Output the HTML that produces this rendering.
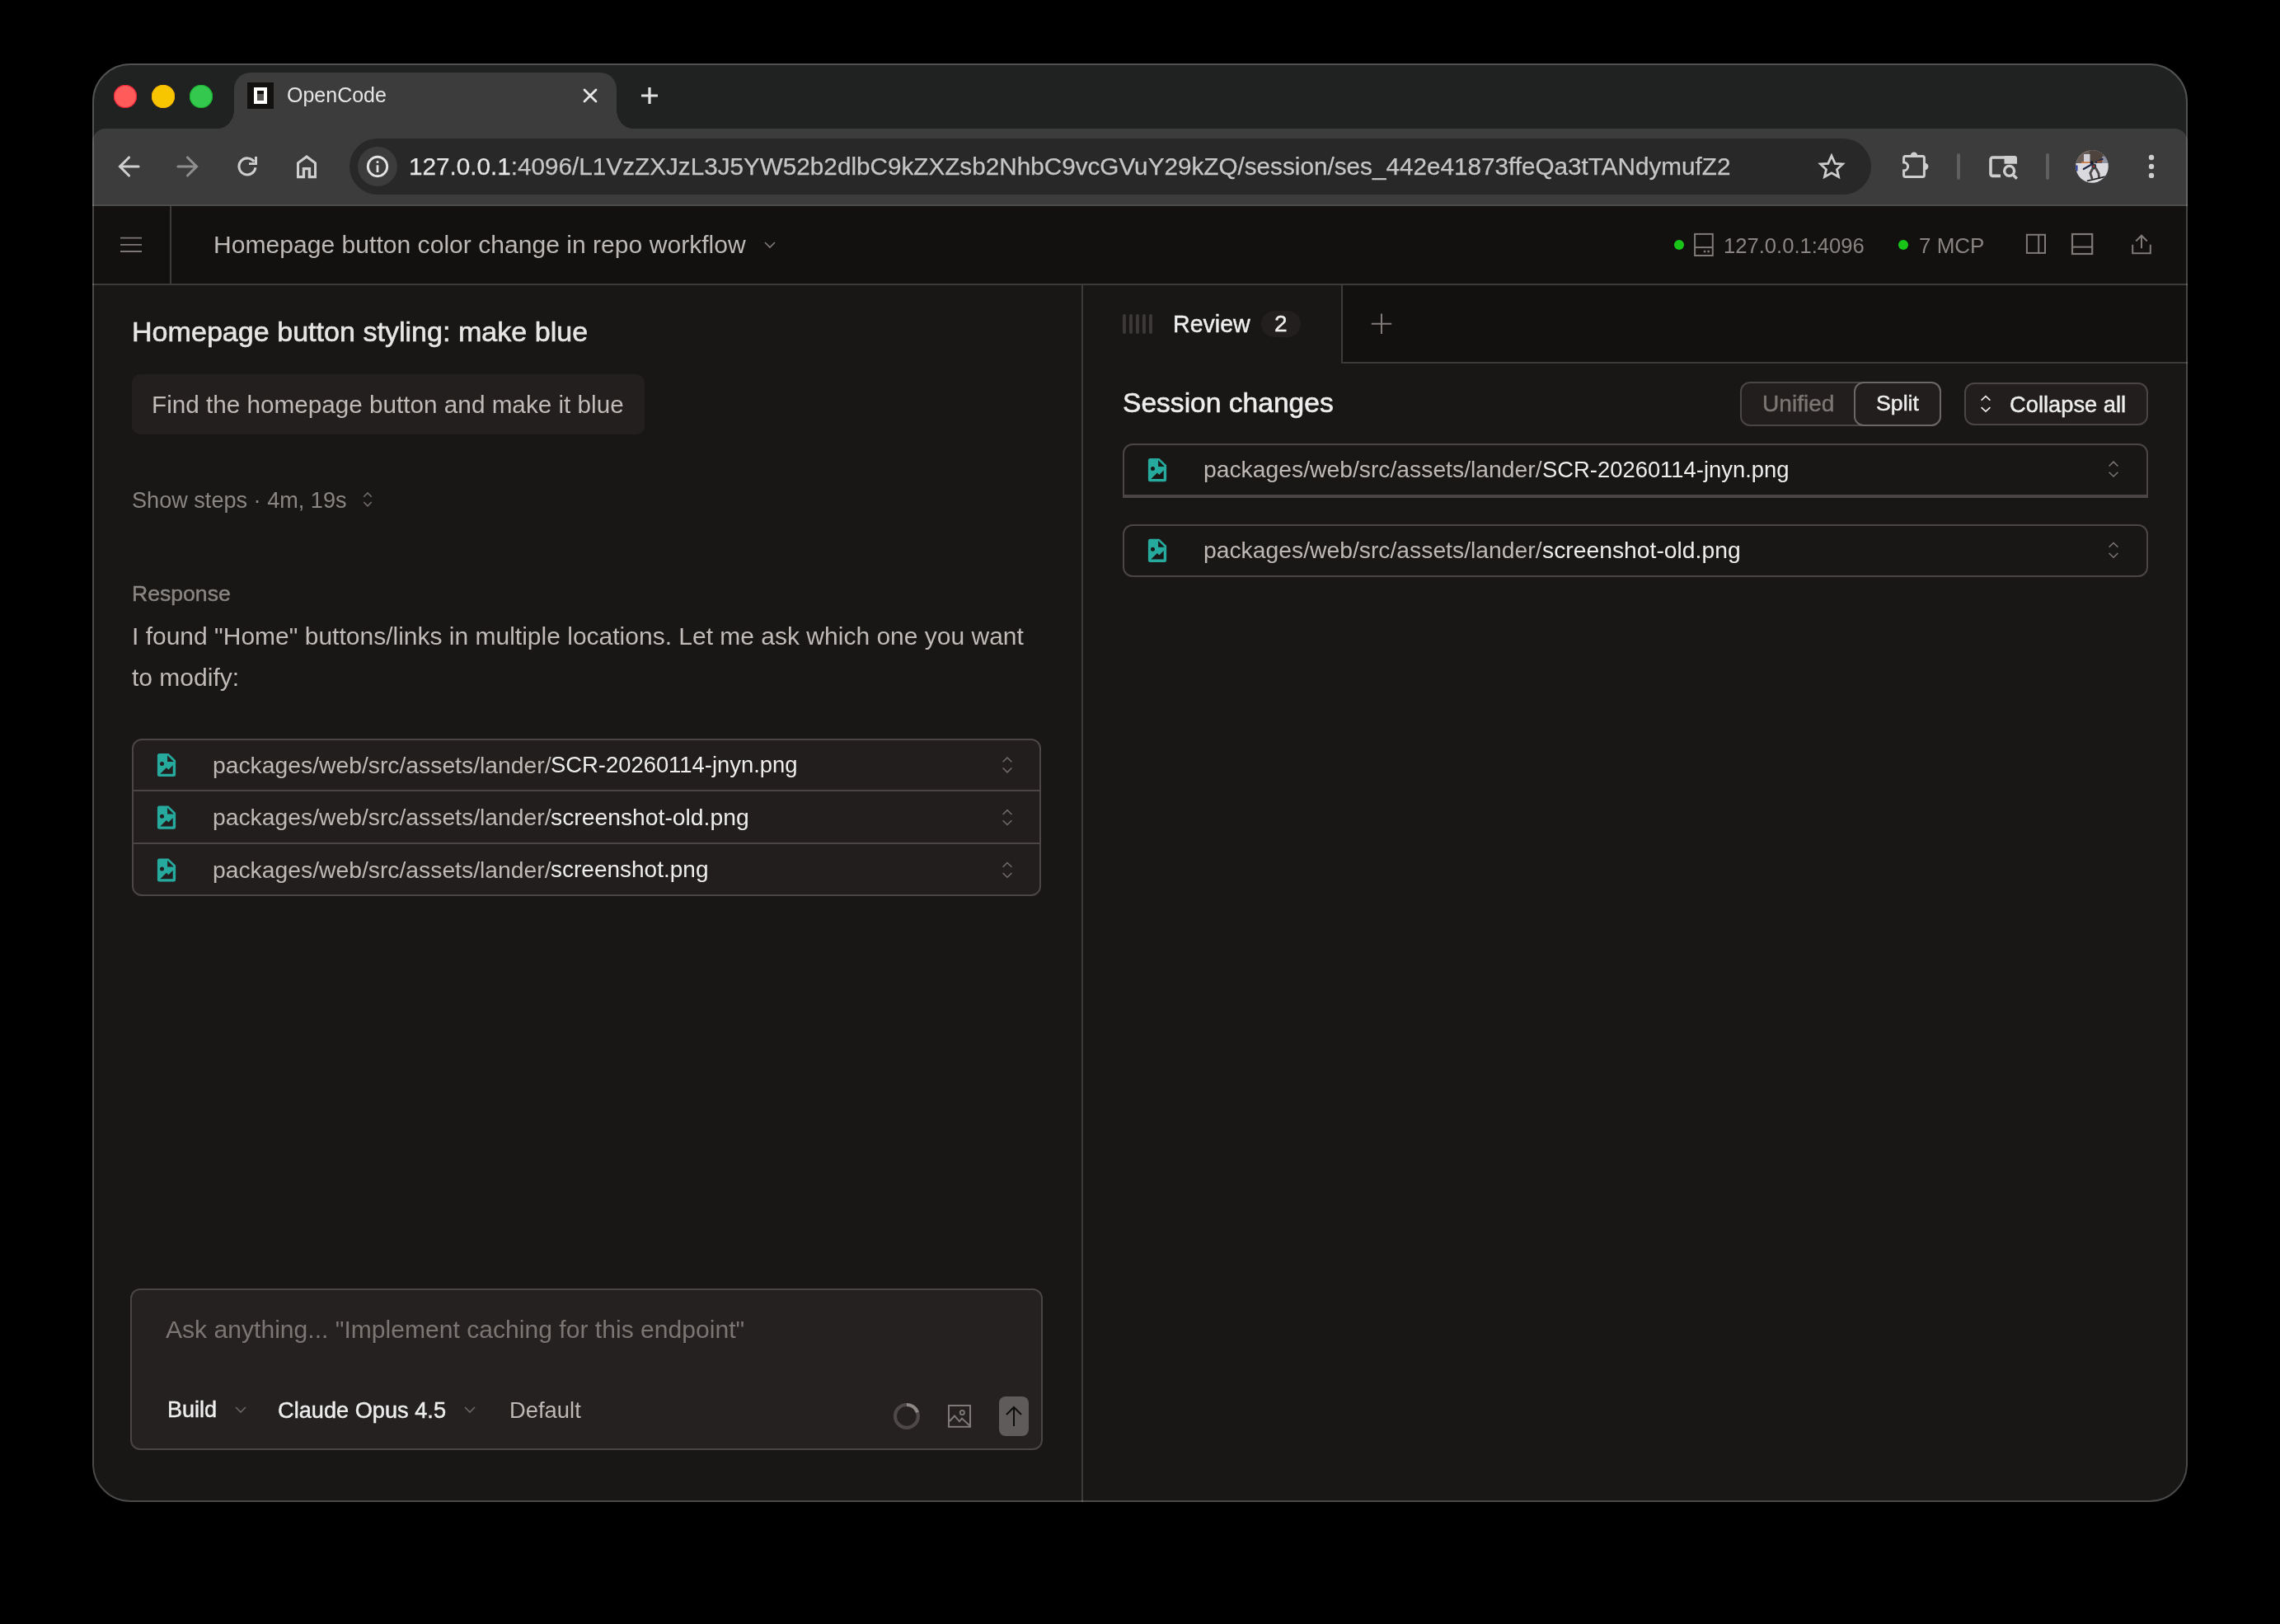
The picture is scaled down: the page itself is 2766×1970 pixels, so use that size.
<!DOCTYPE html>
<html><head><meta charset="utf-8">
<style>
html,body{margin:0;padding:0;background:#000;width:2766px;height:1970px;overflow:hidden;}
body{position:relative;font-family:"Liberation Sans",sans-serif;}
.clip{position:absolute;left:0;top:0;width:2766px;height:1970px;clip-path:inset(77px 112px 148px 112px round 46px);}
.a{position:absolute;}
.t{position:absolute;white-space:nowrap;line-height:1;will-change:transform;}
.m{-webkit-text-stroke:0.45px currentColor;}
svg{position:absolute;overflow:visible;}
</style></head><body>
<div class="clip">
  <!-- title bar -->
  <div class="a" style="left:112px;top:77px;width:2542px;height:110px;background:#202121;"></div>
  <!-- toolbar -->
  <div class="a" style="left:112px;top:156px;width:2542px;height:94px;background:#3c3c3c;border-radius:16px 16px 0 0;"></div>
  <!-- tab -->
  <div class="a" style="left:284px;top:88px;width:464px;height:70px;background:#3c3c3c;border-radius:20px 20px 0 0;"></div>
  <div class="a" style="left:264px;top:133px;width:20px;height:23px;background:radial-gradient(20px 23px at 0 0,transparent 99%,#3c3c3c 100%);"></div>
  <div class="a" style="left:748px;top:133px;width:20px;height:23px;background:radial-gradient(20px 23px at 100% 0,transparent 99%,#3c3c3c 100%);"></div>

  <!-- app -->
  <div class="a" style="left:112px;top:250px;width:2542px;height:1572px;background:#181716;"></div>
  <div class="a" style="left:112px;top:250px;width:2542px;height:94px;background:#121110;"></div>
  <div class="a" style="left:112px;top:248px;width:2542px;height:2px;background:#4a4c4b;"></div>
  <div class="a" style="left:112px;top:344px;width:2542px;height:2px;background:#3d3b3a;"></div>
  <div class="a" style="left:206px;top:250px;width:2px;height:94px;background:#3d3b3a;"></div>
  <div class="a" style="left:1312px;top:346px;width:2px;height:1476px;background:#3d3b3a;"></div>
  <!-- review tab bar -->
  <div class="a" style="left:1629px;top:346px;width:1025px;height:93px;background:#121110;"></div>
  <div class="a" style="left:1627px;top:346px;width:2px;height:95px;background:#3d3b3a;"></div>
  <div class="a" style="left:1627px;top:439px;width:1027px;height:2px;background:#3d3b3a;"></div>
</div>
<div class="a" style="left:112px;top:77px;width:2542px;height:1745px;box-sizing:border-box;border:2px solid rgba(255,255,255,0.22);border-radius:46px;"></div>

<!-- traffic lights -->
<div class="a" style="left:138px;top:103px;width:28px;height:28px;border-radius:50%;background:#fe5b5a;box-shadow:inset 0 0 0 1px #e61e32;"></div>
<div class="a" style="left:184px;top:103px;width:28px;height:28px;border-radius:50%;background:#f8c600;box-shadow:inset 0 0 0 1px #f4b400;"></div>
<div class="a" style="left:230px;top:103px;width:28px;height:28px;border-radius:50%;background:#34c84f;box-shadow:inset 0 0 0 1px #16b22c;"></div>


<!-- app header -->
<div class="t" style="left:259px;top:281.5px;font-size:30.1px;color:#bdb9b6;">Homepage button color change in repo workflow</div>
<div class="a" style="left:2031px;top:291px;width:12px;height:12px;border-radius:50%;background:#19c419;"></div>
<div class="t" style="left:2091px;top:285.6px;font-size:25.6px;color:#8a8583;">127.0.0.1:4096</div>
<div class="a" style="left:2303px;top:291px;width:12px;height:12px;border-radius:50%;background:#19c419;"></div>
<div class="t" style="left:2327.5px;top:285.3px;font-size:26px;color:#8a8583;">7 MCP</div>

<!-- left panel -->
<div class="t m" style="left:160px;top:385.4px;font-size:34.1px;-webkit-text-stroke:0.6px currentColor;color:#e8e6e5;">Homepage button styling: make blue</div>
<div class="a" style="left:160px;top:454px;width:622px;height:73px;border-radius:10px;background:#221f1e;"></div>
<div class="t" style="left:183.5px;top:475.9px;font-size:29.7px;color:#c0bbb8;">Find the homepage button and make it blue</div>
<div class="t" style="left:160px;top:593px;font-size:27.1px;color:#8a8683;">Show steps · 4m, 19s</div>
<div class="t m" style="left:160px;top:706.6px;font-size:26.6px;color:#8a8683;">Response</div>
<div class="t" style="left:160px;top:756.7px;font-size:30px;color:#c0bbb8;">I found "Home" buttons/links in multiple locations. Let me ask which one you want</div>
<div class="t" style="left:160px;top:806.6px;font-size:30px;color:#c0bbb8;">to modify:</div>

<div class="a" style="left:160px;top:896px;width:1103px;height:191px;box-sizing:border-box;border:2px solid #4b4645;border-radius:12px;background:#221e1d;"></div>
<div class="a" style="left:162px;top:957.5px;width:1099px;height:2px;background:#4b4645;"></div>
<div class="a" style="left:162px;top:1022px;width:1099px;height:2px;background:#4b4645;"></div>
<div class="t" style="left:257.5px;top:913.5px;font-size:28.3px;color:#bfb9b6;">packages/web/src/assets/lander/</div><div class="t" style="left:668.3px;top:914.2px;font-size:27.4px;color:#eeeeee;">SCR-20260114-jnyn.png</div>
<div class="t" style="left:257.5px;top:977.1px;font-size:28.3px;color:#bfb9b6;">packages/web/src/assets/lander/</div><div class="t" style="left:668.3px;top:977.1px;font-size:28.3px;color:#eeeeee;">screenshot-old.png</div>
<div class="t" style="left:257.5px;top:1041.1px;font-size:28.3px;color:#bfb9b6;">packages/web/src/assets/lander/</div><div class="t" style="left:668.3px;top:1041.3px;font-size:28.0px;color:#eeeeee;">screenshot.png</div>

<!-- prompt -->
<div class="a" style="left:158px;top:1563px;width:1107px;height:196px;box-sizing:border-box;border:2px solid #4a4544;border-radius:12px;background:#252121;"></div>
<div class="t" style="left:201px;top:1597.5px;font-size:30.1px;color:#7b7674;">Ask anything... "Implement caching for this endpoint"</div>
<div class="t m" style="left:203px;top:1697.2px;font-size:27px;color:#eeeeee;">Build</div>
<div class="t m" style="left:337px;top:1697px;font-size:27.2px;color:#eeeeee;">Claude Opus 4.5</div>
<div class="t" style="left:617.5px;top:1696.8px;font-size:27.4px;color:#bdb8b5;">Default</div>
<div class="a" style="left:1212px;top:1694px;width:36px;height:48px;border-radius:8px;background:#5f5b5a;"></div>

<!-- right panel -->
<div class="t m" style="left:1423px;top:378.8px;font-size:28.6px;color:#eeeeee;">Review</div>
<div class="a" style="left:1530px;top:377px;width:48px;height:32px;border-radius:16px;background:#221f1e;"></div>
<div class="t m" style="left:1546px;top:379.3px;font-size:28px;color:#eeeeee;">2</div>
<div class="t m" style="left:1362px;top:472.4px;font-size:33.6px;-webkit-text-stroke:0.6px currentColor;color:#eeeeee;">Session changes</div>
<div class="a" style="left:2111px;top:463px;width:244px;height:54px;box-sizing:border-box;border:2px solid #4b4645;border-radius:12px;background:#221e1d;"></div>
<div class="a" style="left:2249px;top:463px;width:106px;height:54px;box-sizing:border-box;border:2px solid #6b6766;border-radius:12px;background:#221e1d;"></div>
<div class="t m" style="left:2138px;top:476px;font-size:28.1px;color:#7b7674;">Unified</div>
<div class="t m" style="left:2276px;top:476.2px;font-size:26.7px;color:#eeeeee;">Split</div>
<div class="a" style="left:2383px;top:464px;width:223px;height:52px;box-sizing:border-box;border:2px solid #4b4645;border-radius:12px;background:#221e1d;"></div>
<div class="t m" style="left:2438px;top:476.9px;font-size:27.3px;color:#eeeeee;">Collapse all</div>

<div class="a" style="left:1362px;top:538px;width:1244px;height:66px;box-sizing:border-box;border:2px solid #4b4645;border-bottom-width:4px;border-radius:12px 12px 0 0;background:#181716;"></div>
<div class="a" style="left:1362px;top:636px;width:1244px;height:64px;box-sizing:border-box;border:2px solid #4b4645;border-radius:12px;background:#181716;"></div>
<div class="t" style="left:1459.8px;top:555.3px;font-size:28.3px;color:#bfb9b6;">packages/web/src/assets/lander/</div><div class="t" style="left:1870.6px;top:556.0px;font-size:27.4px;color:#eeeeee;">SCR-20260114-jnyn.png</div>
<div class="t" style="left:1459.8px;top:652.9px;font-size:28.3px;color:#bfb9b6;">packages/web/src/assets/lander/</div><div class="t" style="left:1870.6px;top:652.9px;font-size:28.3px;color:#eeeeee;">screenshot-old.png</div>

<svg style="left:0;top:0;width:2766px;height:1970px;" viewBox="0 0 2766 1970">
  <g fill="none">
    <!-- hamburger -->
    <path d="M146 288.6 H172 M146 296.8 H172 M146 305 H172" stroke="#7d7876" stroke-width="1.8"/>
    <!-- header chevron -->
    <path d="M928 294 L934 300 L940 294" stroke="#7d7876" stroke-width="1.7"/>
    <!-- server icon -->
    <rect x="2056.1" y="283.9" width="21.7" height="26.1" stroke="#7f7a78" stroke-width="2"/>
    <path d="M2056 300.1 H2078" stroke="#7f7a78" stroke-width="2"/>
    <rect x="2066.8" y="303.8" width="2.5" height="2.5" fill="#7f7a78"/>
    <rect x="2071.4" y="303.8" width="2.5" height="2.5" fill="#7f7a78"/>
    <!-- layout icons -->
    <rect x="2458.9" y="284.75" width="22.1" height="22.15" stroke="#7f7a78" stroke-width="2"/>
    <path d="M2473.2 284 V308" stroke="#7f7a78" stroke-width="2"/>
    <rect x="2514" y="284" width="24.2" height="24" stroke="#7f7a78" stroke-width="2.2"/>
    <path d="M2513 299.6 H2539" stroke="#7f7a78" stroke-width="2"/>
    <!-- share -->
    <path d="M2598 286 V301.3 M2591.2 292.5 L2598 285.7 L2604.8 292.5 M2587.2 296.7 V307.3 H2608.8 V296.7" stroke="#7f7a78" stroke-width="2"/>
    <!-- review grip -->
    <g fill="#3d3938">
      <rect x="1362" y="381" width="3.9" height="24" rx="1.95"/>
      <rect x="1370" y="381" width="3.9" height="24" rx="1.95"/>
      <rect x="1378" y="381" width="3.9" height="24" rx="1.95"/>
      <rect x="1386" y="381" width="3.9" height="24" rx="1.95"/>
      <rect x="1394" y="381" width="3.9" height="24" rx="1.95"/>
    </g>
    <!-- review plus -->
    <path d="M1676 380.5 V405 M1663.8 392.75 H1688.2" stroke="#817c7a" stroke-width="2"/>
    <!-- show steps chevrons -->
    <path d="M441.25 602.6999999999999 L446 597.9 L450.75 602.6999999999999 M441.25 608.9999999999999 L446 613.8 L450.75 608.9999999999999" stroke="#716c6a" stroke-width="1.6" fill="none"/>
    <path d="M2403.6 485.6 L2409 480.6 L2414.4 485.6 M2403.6 494.20000000000005 L2409 499.20000000000005 L2414.4 494.20000000000005" stroke="#eeeeee" stroke-width="1.7" fill="none"/>
    <path transform="translate(190.9 913.9)" fill="#27aa9e" fill-rule="evenodd" d="M2.5 0 H13.5 L22.2 8.3 V25.7 A2.5 2.5 0 0 1 19.7 28.2 H2.5 A2.5 2.5 0 0 1 0 25.7 V2.5 A2.5 2.5 0 0 1 2.5 0 Z M12.2 2.3 V10 H19.9 Z M3.1 12.6 A2.5 2.5 0 1 0 8.1 12.6 A2.5 2.5 0 1 0 3.1 12.6 Z M3.4 24.9 L11 17.4 L13.5 19.9 L18.8 14.4 V24.9 Z"/><path transform="translate(190.9 977.6)" fill="#27aa9e" fill-rule="evenodd" d="M2.5 0 H13.5 L22.2 8.3 V25.7 A2.5 2.5 0 0 1 19.7 28.2 H2.5 A2.5 2.5 0 0 1 0 25.7 V2.5 A2.5 2.5 0 0 1 2.5 0 Z M12.2 2.3 V10 H19.9 Z M3.1 12.6 A2.5 2.5 0 1 0 8.1 12.6 A2.5 2.5 0 1 0 3.1 12.6 Z M3.4 24.9 L11 17.4 L13.5 19.9 L18.8 14.4 V24.9 Z"/><path transform="translate(190.9 1041.4)" fill="#27aa9e" fill-rule="evenodd" d="M2.5 0 H13.5 L22.2 8.3 V25.7 A2.5 2.5 0 0 1 19.7 28.2 H2.5 A2.5 2.5 0 0 1 0 25.7 V2.5 A2.5 2.5 0 0 1 2.5 0 Z M12.2 2.3 V10 H19.9 Z M3.1 12.6 A2.5 2.5 0 1 0 8.1 12.6 A2.5 2.5 0 1 0 3.1 12.6 Z M3.4 24.9 L11 17.4 L13.5 19.9 L18.8 14.4 V24.9 Z"/><path transform="translate(1392.9 556)" fill="#27aa9e" fill-rule="evenodd" d="M2.5 0 H13.5 L22.2 8.3 V25.7 A2.5 2.5 0 0 1 19.7 28.2 H2.5 A2.5 2.5 0 0 1 0 25.7 V2.5 A2.5 2.5 0 0 1 2.5 0 Z M12.2 2.3 V10 H19.9 Z M3.1 12.6 A2.5 2.5 0 1 0 8.1 12.6 A2.5 2.5 0 1 0 3.1 12.6 Z M3.4 24.9 L11 17.4 L13.5 19.9 L18.8 14.4 V24.9 Z"/><path transform="translate(1392.9 653.7)" fill="#27aa9e" fill-rule="evenodd" d="M2.5 0 H13.5 L22.2 8.3 V25.7 A2.5 2.5 0 0 1 19.7 28.2 H2.5 A2.5 2.5 0 0 1 0 25.7 V2.5 A2.5 2.5 0 0 1 2.5 0 Z M12.2 2.3 V10 H19.9 Z M3.1 12.6 A2.5 2.5 0 1 0 8.1 12.6 A2.5 2.5 0 1 0 3.1 12.6 Z M3.4 24.9 L11 17.4 L13.5 19.9 L18.8 14.4 V24.9 Z"/>
    <path d="M1216.6 924.3 L1222 919.05 L1227.4 924.3 M1216.6 931.55 L1222 936.8 L1227.4 931.55" stroke="#716c6a" stroke-width="1.6" fill="none"/><path d="M1216.6 987.95 L1222 982.7 L1227.4 987.95 M1216.6 995.2 L1222 1000.45 L1227.4 995.2" stroke="#716c6a" stroke-width="1.6" fill="none"/><path d="M1216.6 1051.75 L1222 1046.5 L1227.4 1051.75 M1216.6 1059.0 L1222 1064.25 L1227.4 1059.0" stroke="#716c6a" stroke-width="1.6" fill="none"/><path d="M2558.6 565.45 L2564 560.2 L2569.4 565.45 M2558.6 572.7 L2564 577.95 L2569.4 572.7" stroke="#7a7573" stroke-width="1.6" fill="none"/><path d="M2558.6 663.75 L2564 658.5 L2569.4 663.75 M2558.6 671.0 L2564 676.25 L2569.4 671.0" stroke="#7a7573" stroke-width="1.6" fill="none"/>
    <!-- prompt chevrons -->
    <path d="M286 1707 L292 1713 L298 1707 M564 1707 L570 1713 L576 1707" stroke="#6b6665" stroke-width="1.6"/>
    <!-- spinner -->
    <circle cx="1099.9" cy="1717.9" r="13.9" stroke="#4e4948" stroke-width="4.2"/>
    <path d="M1099.9 1704 A13.9 13.9 0 0 1 1113 1713.2" stroke="#8d8886" stroke-width="4.2"/>
    <!-- image icon -->
    <rect x="1151" y="1705" width="26" height="25.8" stroke="#7f7a78" stroke-width="2"/>
    <circle cx="1167.3" cy="1713.5" r="2.6" stroke="#7f7a78" stroke-width="1.8"/>
    <path d="M1152 1724 L1158 1717.6 L1164 1724.3 L1167 1720.6 L1176.5 1729.5" stroke="#7f7a78" stroke-width="2"/>
    <!-- send arrow -->
    <path d="M1230 1706.5 V1730 M1221 1716 L1230 1707 L1239 1716" stroke="#0d0d0d" stroke-width="2"/>
  </g>
</svg>

<!-- browser chrome content -->
<div class="a" style="left:300px;top:100px;width:32px;height:32px;background:#121110;"></div>
<div class="a" style="left:308px;top:106px;width:16px;height:20px;background:#fff;"></div>
<div class="a" style="left:312px;top:110px;width:8px;height:4px;background:#121110;"></div>
<div class="a" style="left:312px;top:114px;width:8px;height:8px;background:#5a5757;"></div>
<div class="t" style="left:348px;top:103px;font-size:25px;color:#e6e6e6;">OpenCode</div>
<!-- url bar -->
<div class="a" style="left:424px;top:168px;width:1846px;height:68px;border-radius:34px;background:#282828;"></div>
<div class="a" style="left:434px;top:178px;width:48px;height:48px;border-radius:50%;background:#3c3c3c;"></div>
<div class="t" style="left:495.5px;top:187.2px;font-size:29.7px;color:#c6c6c6;-webkit-text-stroke:0.25px currentColor;"><span style="color:#e6e6e6">127.0.0.1</span>:4096/L1VzZXJzL3J5YW52b2dlbC9kZXZsb2NhbC9vcGVuY29kZQ/session/ses_442e41873ffeQa3tTANdymufZ2</div>
<div class="a" style="left:2374px;top:186px;width:4px;height:32px;border-radius:2px;background:#5f5f5f;"></div>
<div class="a" style="left:2482px;top:186px;width:4px;height:32px;border-radius:2px;background:#5f5f5f;"></div>
<!-- avatar -->
<svg style="left:2518px;top:182px;width:40px;height:40px;" viewBox="0 0 40 40">
  <defs><clipPath id="avc"><circle cx="20" cy="20" r="19.8"/></clipPath></defs>
  <g clip-path="url(#avc)">
    <rect width="40" height="40" fill="#d9d9de"/>
    <rect x="0" y="0" width="40" height="16" fill="#6a5f58"/>
    <rect x="17" y="0" width="16" height="15" fill="#4e433d"/>
    <rect x="10" y="5" width="7.5" height="10" fill="#d0d0d6"/>
    <rect x="7" y="14.3" width="11" height="2.2" fill="#cf7a45"/>
    <rect x="32" y="8" width="8" height="8" fill="#8d93a3"/>
    <rect x="0" y="16" width="40" height="1.5" fill="#dcdce2"/>
    <path d="M9.8 23 L16 19.5 L21 16.8 M25 15 L32.5 11" stroke="#202848" stroke-width="2.2" fill="none" stroke-linecap="round"/>
    <path d="M26 14.5 L33 13" stroke="#a8552f" stroke-width="1.6" fill="none"/>
    <circle cx="19.5" cy="15.3" r="2" fill="#1b2033"/>
    <ellipse cx="22.3" cy="20" rx="2.9" ry="3.4" fill="#2a3a40"/>
    <circle cx="22" cy="19.8" r="1.4" fill="#a8302a"/>
    <path d="M20.5 23 L17.8 28 L19.8 34 M24.8 22.5 L28 28.5 L28.5 33.5" stroke="#4b4749" stroke-width="2.8" fill="none" stroke-linecap="round"/>
    <path d="M14.5 37.3 L35.5 32.3" stroke="#222" stroke-width="1.7" stroke-linecap="round"/>
    <rect x="0" y="18.5" width="2.5" height="7" fill="#2a3a9a"/>
  </g>
</svg>
<svg style="left:0;top:0;width:2766px;height:1970px;" viewBox="0 0 2766 1970">
  <g fill="none" stroke-linecap="butt">
    <!-- tab close -->
    <path d="M709 109 L723 123 M723 109 L709 123" stroke="#e8e8e8" stroke-width="2.8" stroke-linecap="round"/>
    <path d="M788 106 V126 M778 116 H798" stroke="#e0e0e0" stroke-width="3.2"/>
    <!-- back -->
    <path d="M168 202 H146 M156.5 191 L145.5 202 L156.5 213" stroke="#cecece" stroke-width="3.1" stroke-linecap="round"/>
    <path d="M216 202 H238 M227.5 191 L238.5 202 L227.5 213" stroke="#8e8e8e" stroke-width="3.1" stroke-linecap="round"/>
    <!-- reload -->
    <path d="M309.9 203.3 A10 10 0 1 1 308.2 196.2" stroke="#cecece" stroke-width="3.1"/>
    <path d="M309 190 H312 V200 H302 V197.2 H309 Z" fill="#cecece" stroke="none"/>
    <!-- home -->
    <path fill="#cecece" fill-rule="evenodd" stroke="none" d="M360 197 L372 188 L384 197 L384 216.3 L373.7 216.3 L373.7 206.3 L370.1 206.3 L370.1 216.3 L360 216.3 Z M363 198.6 L372 192 L381 198.6 L381 212.9 L377.1 212.9 L377.1 202.9 L366.8 202.9 L366.8 212.9 L363 212.9 Z"/>
    <!-- info -->
    <circle cx="458" cy="202" r="11.7" stroke="#e3e3e3" stroke-width="2.9"/>
    <path d="M458 200.3 V209" stroke="#e3e3e3" stroke-width="2.7"/>
    <circle cx="458" cy="196.6" r="1.5" fill="#e3e3e3" stroke="none"/>
    <!-- star -->
    <path d="M2222 189 L2226.2 198.3 L2235.5 199 L2228.5 205.6 L2230.5 214.5 L2222 209.8 L2213.5 214.5 L2215.5 205.6 L2208.5 199 L2217.8 198.3 Z" stroke="#cecece" stroke-width="2.8" stroke-linejoin="miter"/>
    <!-- puzzle -->
    <path d="M2311.6 189.4 H2332.4 A2 2 0 0 1 2334.4 191.4 V212.4 A2 2 0 0 1 2332.4 214.4 H2311.6 A2 2 0 0 1 2309.6 212.4 V207 A5 5 0 0 0 2309.6 197 V191.4 A2 2 0 0 1 2311.6 189.4 Z" stroke="#cecece" stroke-width="3"/>
    <path d="M2317.8 188.6 A4.2 4.2 0 0 1 2326.2 188.6 Z M2335.2 197.8 A4.2 4.2 0 0 1 2335.2 206.2 Z M2317.8 188.4 H2326.2 V190 H2317.8 Z M2334 197.8 H2335.4 V206.2 H2334 Z" fill="#cecece" stroke="none"/>
    <!-- search tab -->
    <path d="M2427 213.4 H2417.5 A2.5 2.5 0 0 1 2415 210.9 V193.5 A2.5 2.5 0 0 1 2417.5 191 H2432" stroke="#cecece" stroke-width="3.6"/>
    <path d="M2431.5 189 H2444 A3 3 0 0 1 2447 192 V198.7 H2431.5 Z" fill="#cecece" stroke="none"/>
    <circle cx="2437.6" cy="207.4" r="6" stroke="#cecece" stroke-width="3.4"/>
    <path d="M2441.8 211.8 L2446.8 216.8" stroke="#cecece" stroke-width="3.4"/>
    <!-- kebab -->
    <circle cx="2610" cy="191" r="3.2" fill="#cecece" stroke="none"/>
    <circle cx="2610" cy="202" r="3.2" fill="#cecece" stroke="none"/>
    <circle cx="2610" cy="212.9" r="3.2" fill="#cecece" stroke="none"/>
  </g>
</svg>

</body></html>
